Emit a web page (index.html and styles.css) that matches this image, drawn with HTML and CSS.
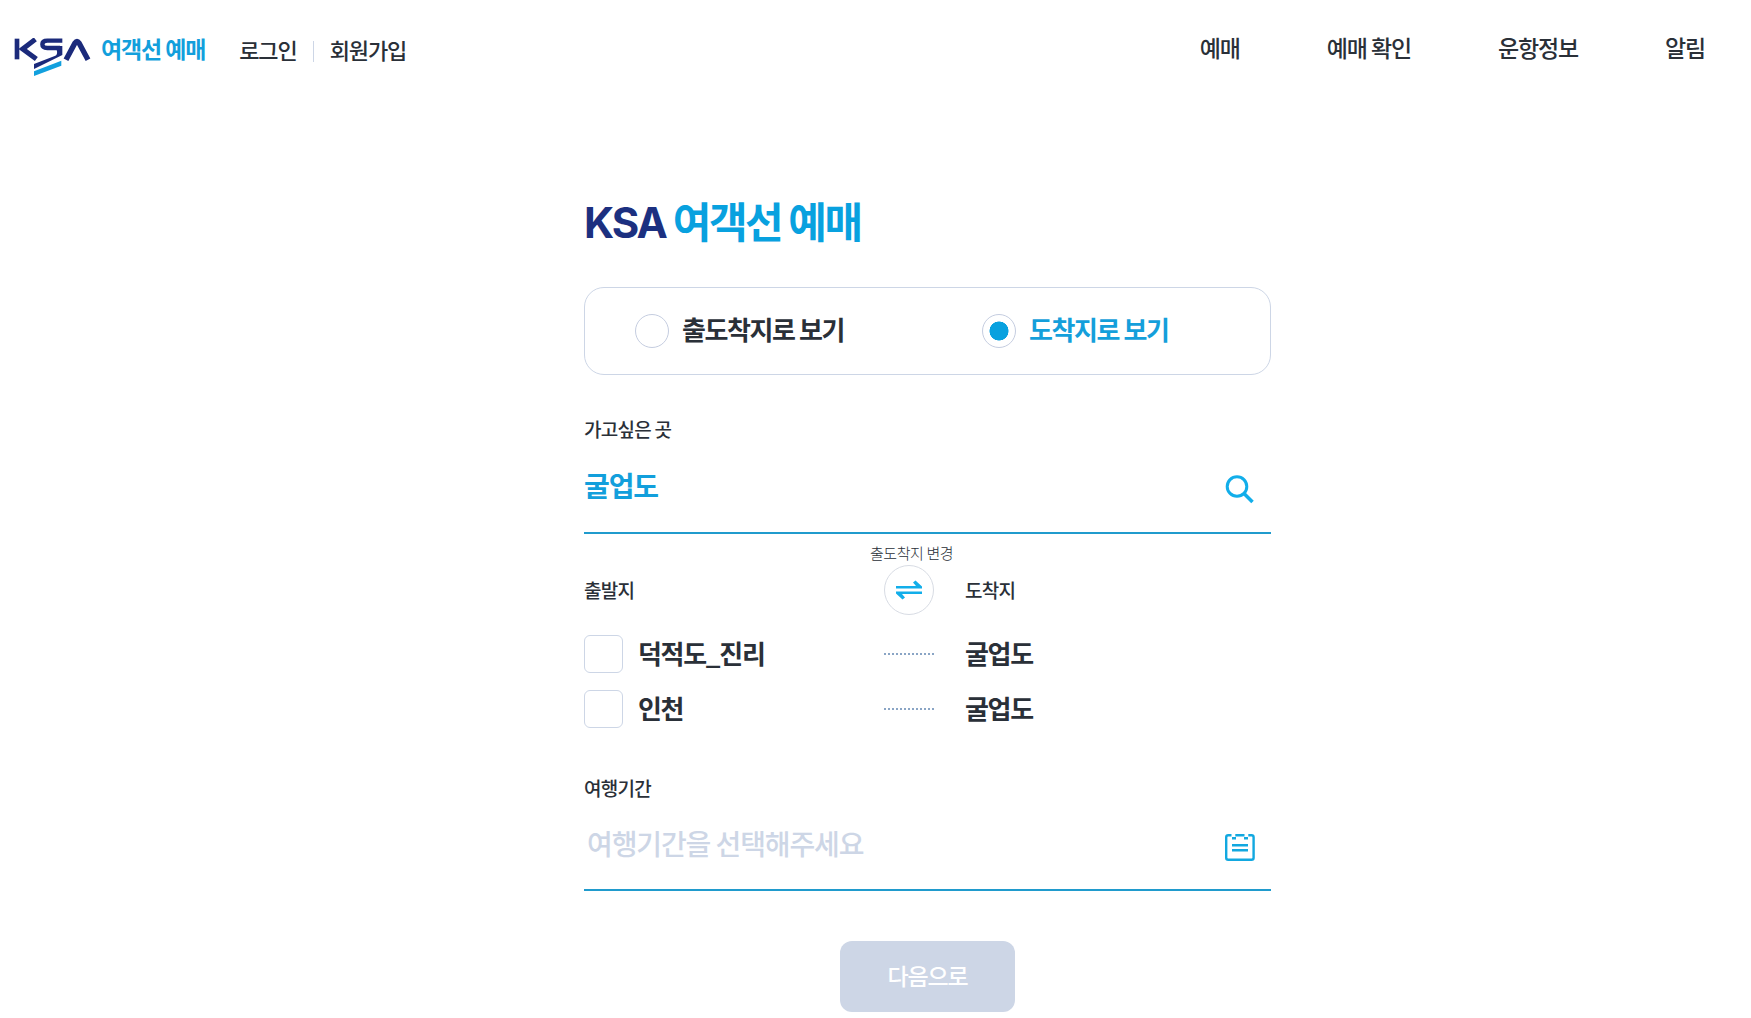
FILE: index.html
```html
<!DOCTYPE html>
<html lang="ko">
<head>
    <meta charset="UTF-8">
    <meta name="viewport" content="width=device-width, initial-scale=1.0">
    <title>KSA 여객선 예매</title>
    <link rel="stylesheet" href="styles.css">
</head>
<body>
    <header class="header">
        <a class="logo" href="#">
            <svg class="logo-mark" viewBox="42 54 234 117">
                <g fill="none" stroke="#1b2a7b">
                    <path d="M51 56V118" stroke-width="14"/>
                    <path d="M106 58L68 87L109 117" stroke-width="15"/>
                    <path d="M187 62H142Q127 62 127 73Q127 84 142 84H180" stroke-width="13"/>
                    <path d="M198 119L225 69Q231 60 237 69L264 119" stroke-width="16"/>
                </g>
                <path fill="#1b2a7b" d="M170 78H187V105L102 147V132L166 107Q174 103 170 89Z"/>
                <path fill="#12a0de" d="M184 122V137L102 168V154Z"/>
            </svg>
            <span class="logo-text">여객선 예매</span>
        </a>
        <div class="member">
            <a href="#">로그인</a>
            <a href="#">회원가입</a>
        </div>
        <nav class="nav">
            <a href="#">예매</a>
            <a href="#">예매 확인</a>
            <a href="#">운항정보</a>
            <a href="#">알림</a>
        </nav>
    </header>

    <main class="container">
        <h1><span>KSA</span> 여객선 예매</h1>

        <div class="view-type">
            <label class="radio"><input type="radio" name="view"><span>출도착지로 보기</span></label>
            <label class="radio"><input type="radio" name="view" checked><span>도착지로 보기</span></label>
        </div>

        <section class="field">
            <h2>가고싶은 곳</h2>
            <div class="field-row">
                <input class="place" type="text" value="굴업도">
                <svg class="icon" viewBox="0 0 32 32" fill="none" stroke="#12aeea" stroke-width="3">
                    <circle cx="14" cy="14.5" r="9.8"/>
                    <path d="M21 21.5L29.5 30" stroke-width="3.6"/>
                </svg>
            </div>
        </section>

        <section class="route">
            <div class="route-head">
                <h2>출발지</h2>
                <div class="change">
                    <span class="change-text">출도착지 변경</span>
                    <button class="change-btn" type="button">
                        <svg width="26" height="20" viewBox="0 0 26 20" fill="#12aeea">
                            <path d="M0 6H20L17 2.5L19.5 .5L26 6.5V8.5H0Z"/>
                            <path d="M26 14H6L9 17.5L6.5 19.5L0 13.5V11.5H26Z"/>
                        </svg>
                    </button>
                </div>
                <h2>도착지</h2>
            </div>
            <div class="route-row">
                <label class="check"><input type="checkbox"><span>덕적도_진리</span></label>
                <i class="dots"></i>
                <strong>굴업도</strong>
            </div>
            <div class="route-row">
                <label class="check"><input type="checkbox"><span>인천</span></label>
                <i class="dots"></i>
                <strong>굴업도</strong>
            </div>
        </section>

        <section class="field period">
            <h2>여행기간</h2>
            <div class="field-row">
                <input type="text" placeholder="여행기간을 선택해주세요">
                <svg class="icon" viewBox="0 0 32 32" fill="none" stroke="#12a8e0" stroke-width="2.4">
                    <path d="M8.5 5.2H5.2Q3.2 5.2 3.2 7.2V27.8Q3.2 29.8 5.2 29.8H28.6Q30.6 29.8 30.6 27.8V7.2Q30.6 5.2 28.6 5.2H25.3"/>
                    <path d="M12.3 5.2H21.5M9 8.2H13M21 8.2H25M9 15.2H25M9 20.2H25"/>
                </svg>
            </div>
        </section>

        <button class="next" type="button">다음으로</button>
    </main>
</body>
</html>
```
FILE: styles.css
```css
* {
    box-sizing: border-box;
    margin: 0;
    padding: 0;
    letter-spacing: -0.05em;
    word-spacing: -0.05em;
}
body {
    font-family: 'Noto Sans CJK KR', sans-serif;
    background-color: #fff;
    color: #2a3038;
    overflow: hidden;
}
a {
    color: inherit;
    text-decoration: none;
}
input,
button {
    font-family: inherit;
}
.header {
    display: flex;
    align-items: center;
    height: 100px;
    padding: 0 46px 0 14px;
}
.logo {
    display: flex;
    align-items: center;
}
.logo-mark {
    width: 78px;
    height: 39px;
    margin-top: 14px;
}
.logo-text {
    margin-left: 9px;
    padding-bottom: 4px;
    font-size: 23px;
    font-weight: 700;
    color: #129fdc;
}
.member {
    display: flex;
    margin-left: 34px;
    padding-bottom: 3px;
    font-size: 22px;
    font-weight: 500;
}
.member a + a {
    position: relative;
    margin-left: 33px;
}
.member a + a::before {
    content: "";
    position: absolute;
    left: -17px;
    top: 8px;
    width: 1px;
    height: 21px;
    background-color: #cdd6e6;
}
.nav {
    display: flex;
    gap: 87px;
    margin-left: auto;
    padding-bottom: 6px;
    font-size: 23px;
    font-weight: 500;
}
.container {
    width: 687px;
    margin-left: 584px;
    padding-top: 89px;
}
h1 {
    height: 62px;
    line-height: 62px;
    font-size: 42px;
    letter-spacing: -0.06em;
    color: #08a1df;
}
h1 span {
    font-family: Inter, sans-serif;
    color: #1c3080;
}
h2 {
    font-size: 19px;
    font-weight: 500;
    line-height: 28px;
    letter-spacing: -0.04em;
}
.view-type {
    display: flex;
    align-items: center;
    height: 88px;
    margin-top: 36px;
    padding-left: 50px;
    border: 1px solid #cdd6e6;
    border-radius: 20px;
}
.radio {
    display: flex;
    flex-shrink: 0;
    align-items: center;
    width: 347px;
    font-size: 26px;
    font-weight: 700;
}
.radio + .radio {
    width: auto;
}
.radio span {
    padding-bottom: 5px;
    letter-spacing: -0.055em;
}
.radio input {
    appearance: none;
    width: 34px;
    height: 34px;
    margin-right: 13px;
    border: 1px solid #c5cde0;
    border-radius: 50%;
}
.radio input:checked {
    background: radial-gradient(circle, #08a1df 9.2px, transparent 9.8px);
}
.radio input:checked + span {
    color: #149fdb;
}
.field {
    margin-top: 40px;
}
.field-row {
    display: flex;
    align-items: center;
    height: 91px;
    padding-right: 16px;
    border-bottom: 2px solid #209bcd;
}
.field-row input {
    flex: 1;
    height: 60px;
    padding-bottom: 6px;
    border: 0;
    outline: 0;
    font-size: 28px;
    font-weight: 500;
    letter-spacing: -0.04em;
}
.field-row .place {
    font-weight: 700;
    color: #129fdc;
}
.field-row input::placeholder {
    letter-spacing: inherit;
    word-spacing: inherit;
    color: #cdd6e6;
    opacity: 1;
}
.icon {
    width: 32px;
    height: 32px;
}
.route {
    padding-top: 31px;
}
.route-head,
.route-row {
    display: grid;
    grid-template-columns: 300px 50px 1fr;
    align-items: center;
}
.route-head {
    height: 50px;
    margin-bottom: 11px;
}
.route-head h2:last-child,
.route-row strong {
    padding-left: 31px;
}
.route-row strong {
    padding-bottom: 3px;
    font-weight: 700;
}
.change {
    position: relative;
}
.change-text {
    position: absolute;
    left: -14px;
    bottom: 51px;
    font-size: 15px;
    font-weight: 300;
    line-height: 22px;
    letter-spacing: -0.03em;
    white-space: nowrap;
}
.change-btn {
    display: flex;
    align-items: center;
    justify-content: center;
    width: 50px;
    height: 50px;
    border: 1px solid #d8dce4;
    border-radius: 50%;
    background-color: #fff;
}
.route-row {
    height: 55px;
    font-size: 26px;
    font-weight: 700;
}
.check {
    display: flex;
    align-items: center;
}
.check input {
    appearance: none;
    width: 39px;
    height: 38px;
    margin-right: 15px;
    border: 1px solid #cdd6e6;
    border-radius: 6px;
}
.check span {
    padding-bottom: 2px;
}
.dots {
    border-top: 2px dotted #8aa5c5;
}
.period {
    margin-top: 38px;
}
.period .field-row {
    height: 89px;
}
.period input {
    padding-left: 3px;
}
.next {
    display: block;
    width: 175px;
    height: 71px;
    margin: 50px auto 0;
    padding-bottom: 4px;
    border: 0;
    border-radius: 12px;
    background-color: #cdd6e6;
    font-size: 23px;
    font-weight: 500;
    color: #fff;
}
```
